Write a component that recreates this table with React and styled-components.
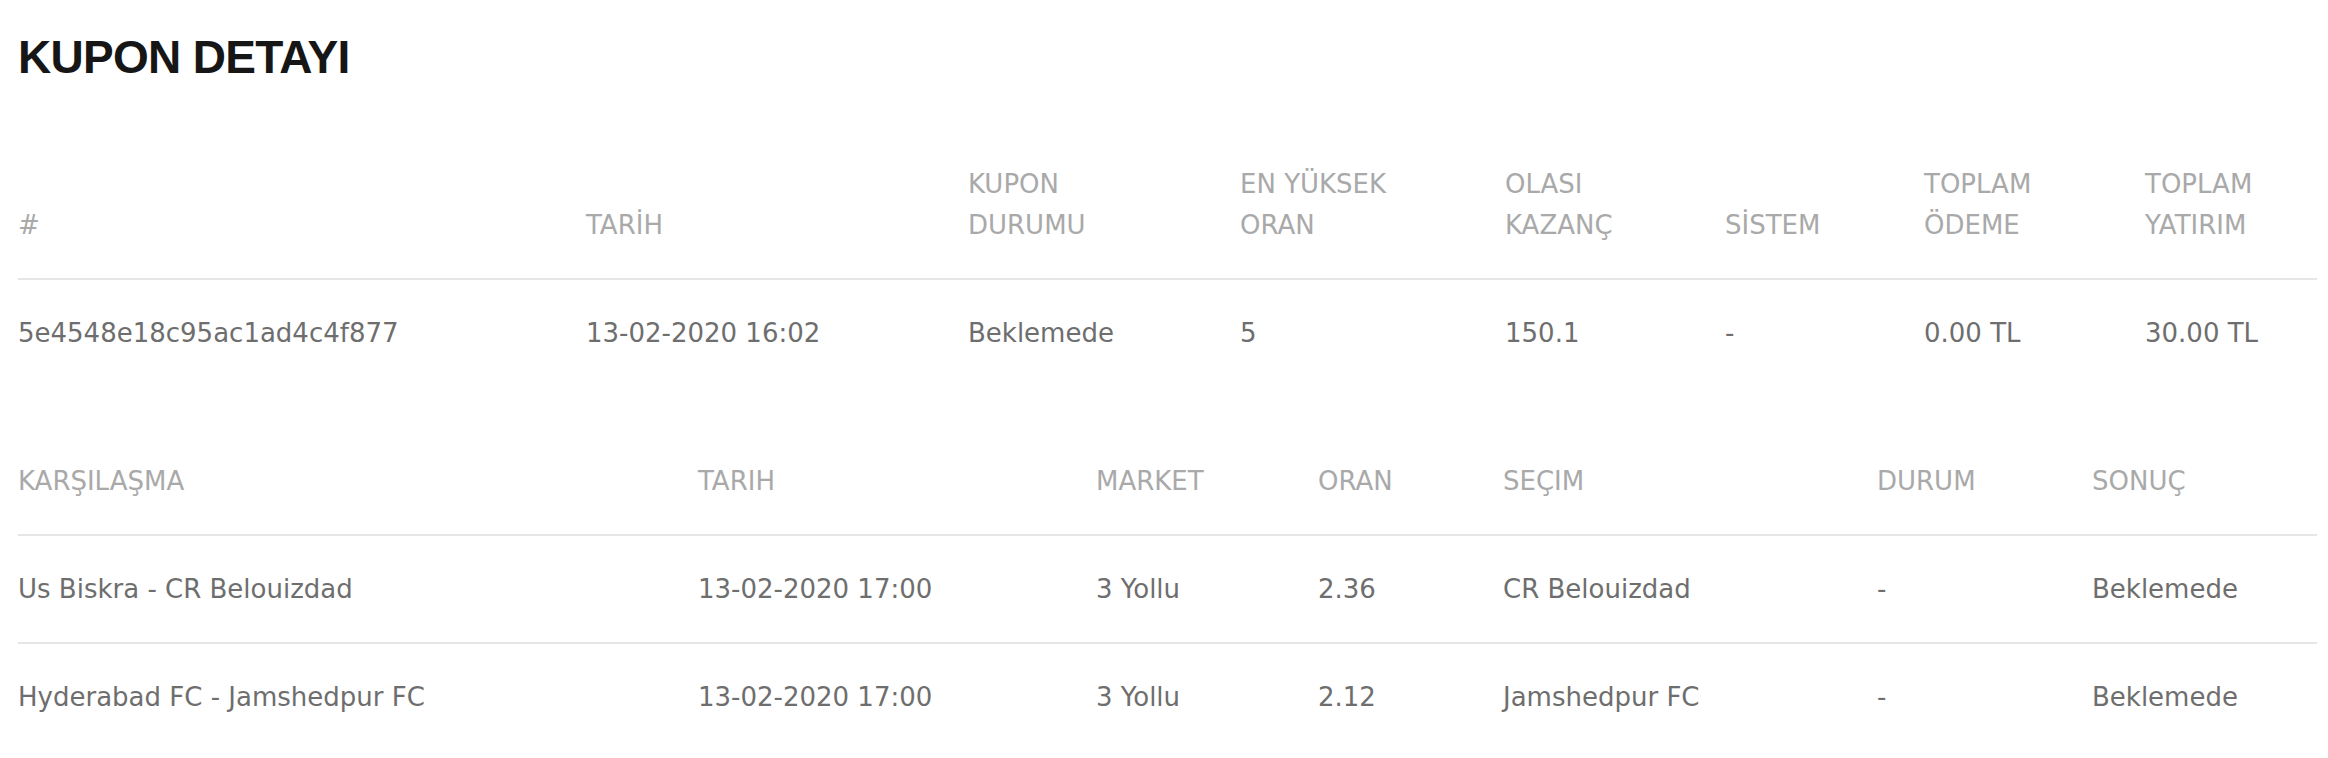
import styled, { createGlobalStyle } from "styled-components";

const GlobalStyle = createGlobalStyle`
  html, body {
    margin: 0;
    padding: 0;
    background: #ffffff;
  }
  body {
    font-family: "DejaVu Sans", "Liberation Sans", sans-serif;
  }
`;

const coupon = {
  id: "5e4548e18c95ac1ad4c4f877",
  date: "13-02-2020 16:02",
  status: "Beklemede",
  maxOdd: "5",
  winning: "150.1",
  system: "-",
  payout: "0.00 TL",
  stake: "30.00 TL",
};

const matches = [
  {
    name: "Us Biskra - CR Belouizdad",
    date: "13-02-2020 17:00",
    market: "3 Yollu",
    odd: "2.36",
    pick: "CR Belouizdad",
    state: "-",
    result: "Beklemede",
  },
  {
    name: "Hyderabad FC - Jamshedpur FC",
    date: "13-02-2020 17:00",
    market: "3 Yollu",
    odd: "2.12",
    pick: "Jamshedpur FC",
    state: "-",
    result: "Beklemede",
  },
];

const couponCols = "568px 382px 272px 265px 220px 199px 221px 1fr";
const matchCols = "680px 398px 222px 185px 374px 215px 1fr";

export default function App() {
  return (
    <>
      <GlobalStyle />
      <Page>
        <Title>KUPON DETAYI</Title>

        <Table>
          <Row $cols={couponCols} $divider>
            <HeadCell>#</HeadCell>
            <HeadCell>TARİH</HeadCell>
            <HeadCell>
              KUPON
              <br />
              DURUMU
            </HeadCell>
            <HeadCell>
              EN YÜKSEK
              <br />
              ORAN
            </HeadCell>
            <HeadCell>
              OLASI
              <br />
              KAZANÇ
            </HeadCell>
            <HeadCell>SİSTEM</HeadCell>
            <HeadCell>
              TOPLAM
              <br />
              ÖDEME
            </HeadCell>
            <HeadCell>
              TOPLAM
              <br />
              YATIRIM
            </HeadCell>
          </Row>
          <Row $cols={couponCols}>
            <Cell>{coupon.id}</Cell>
            <Cell>{coupon.date}</Cell>
            <Cell>{coupon.status}</Cell>
            <Cell>{coupon.maxOdd}</Cell>
            <Cell>{coupon.winning}</Cell>
            <Cell>{coupon.system}</Cell>
            <Cell>{coupon.payout}</Cell>
            <Cell>{coupon.stake}</Cell>
          </Row>
        </Table>

        <Table $gap>
          <Row $cols={matchCols} $divider>
            <HeadCell>KARŞILAŞMA</HeadCell>
            <HeadCell>TARIH</HeadCell>
            <HeadCell>MARKET</HeadCell>
            <HeadCell>ORAN</HeadCell>
            <HeadCell>SEÇIM</HeadCell>
            <HeadCell>DURUM</HeadCell>
            <HeadCell>SONUÇ</HeadCell>
          </Row>
          {matches.map((m, i) => (
            <Row key={m.name} $cols={matchCols} $divider={i < matches.length - 1}>
              <Cell>{m.name}</Cell>
              <Cell>{m.date}</Cell>
              <Cell>{m.market}</Cell>
              <Cell>{m.odd}</Cell>
              <Cell>{m.pick}</Cell>
              <Cell>{m.state}</Cell>
              <Cell>{m.result}</Cell>
            </Row>
          ))}
        </Table>
      </Page>
    </>
  );
}

const Page = styled.main`
  padding: 31px 11px 0 18px;
`;

const Title = styled.h1`
  margin: 0 0 47px;
  font-family: "Liberation Sans", Arial, sans-serif;
  font-size: 46px;
  font-weight: 700;
  line-height: 53px;
  letter-spacing: -0.7px;
  color: #161616;
`;

const Table = styled.div`
  display: flex;
  flex-direction: column;
  margin-top: ${(p) => (p.$gap ? "40px" : "0")};
`;

const Row = styled.div`
  display: grid;
  grid-template-columns: ${(p) => p.$cols};
  align-items: end;
  border-bottom: 2px solid ${(p) => (p.$divider ? "#e6e6e6" : "transparent")};
`;

const HeadCell = styled.div`
  padding: 33px 0 32px;
  font-size: 26px;
  font-weight: 400;
  line-height: 41px;
  color: #a9a9a9;
  white-space: nowrap;
`;

const Cell = styled.div`
  padding: 33px 0 32px;
  font-size: 26px;
  font-weight: 400;
  line-height: 41px;
  color: #6e6e6e;
  white-space: nowrap;
`;
